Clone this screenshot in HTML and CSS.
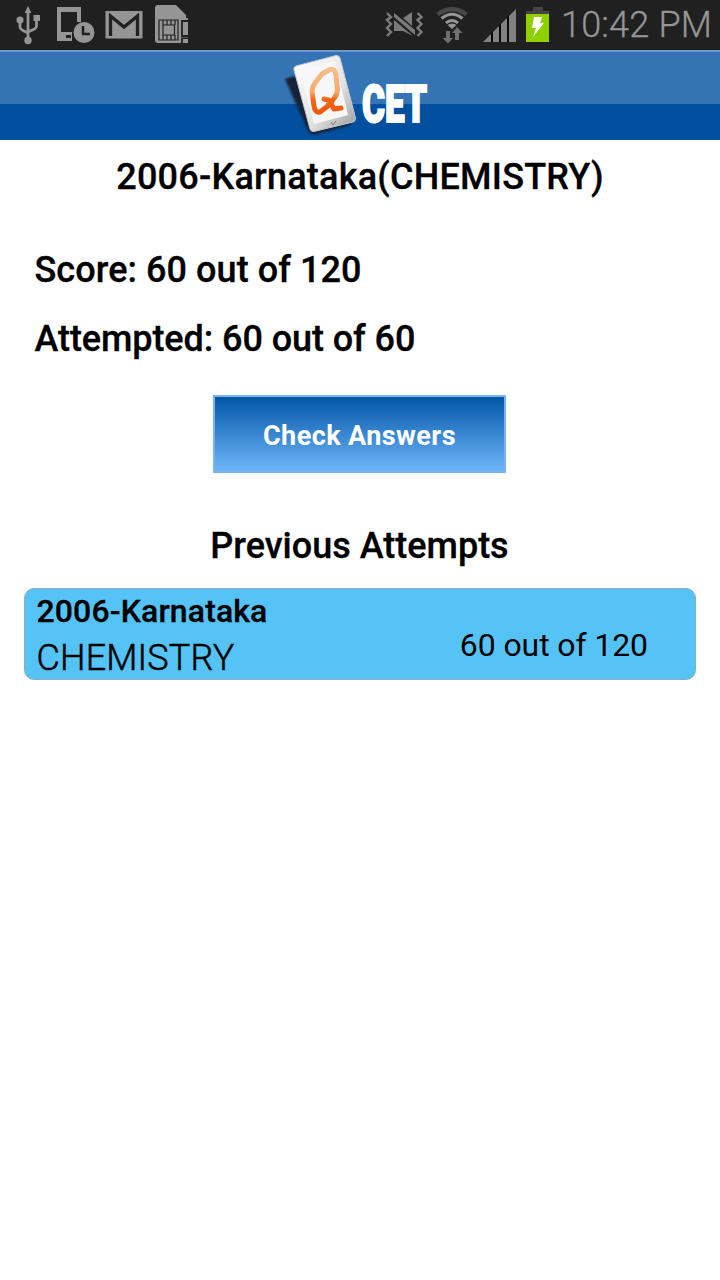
FILE: index.html
```html
<!DOCTYPE html>
<html lang="en">
<head>
<meta charset="utf-8">
<title>Test Result</title>
<link rel="stylesheet" href="styles.css">
</head>
<body>
<div class="status">
  <svg class="icons-left" width="200" height="50" viewBox="0 0 200 50" fill="#959595">
    <g fill="none" stroke="#959595" stroke-width="2.800">
      <path d="M28 11V38M20 20V27Q20 29 22 30L28 33M36.500 18V26Q36.500 28 34.500 29L28 32"/>
    </g>
    <path d="M24.500 13L28 6L31.500 13ZM33.500 15H40V21H33.500Z"/><circle cx="20" cy="20" r="3.500"/><circle cx="28" cy="40.500" r="3.700"/>
    <path fill-rule="evenodd" d="M57 7H81V22H77V12H61V32H72V41H57ZM66 35V38H71V35Z"/>
    <circle cx="84" cy="32.500" r="10.500"/>
    <path d="M83 26V34H90" fill="none" stroke="#202020" stroke-width="2.500"/>
    <path d="M105.500 11H142.500V38.500H105.500Z"/>
    <path d="M110.500 36V16L124 27L137.500 16V36" fill="none" stroke="#202020" stroke-width="3.300"/>
    <path d="M158 5H176L186 15V18H188V43H158Q155 43 155 40V8Q155 5 158 5Z"/>
    <g fill="none" stroke="#202020" stroke-width="1.200">
      <path d="M159 20H178V40H159ZM163 25H174.500V35H163ZM167 20V25M171 20V25M167 35V40M171 35V40M175 20V25M163 20V25M163 35V40M175 35V40"/>
      <path d="M182 21H188V36H182ZM182 38.500H188V43H182Z" stroke-width="1.800"/>
    </g>
    <path d="M183 22H188V35H183ZM183 39H188V43H183Z"/>
  </svg>
  <svg class="icons-right" width="170" height="50" viewBox="380 0 170 50" fill="#7b7b7b">
    <path d="M387 13L391 17L387 20L391 24L387 28L391 32L387 36M417.500 13L421.500 17L417.500 20L421.500 24L417.500 28L421.500 32L417.500 36" fill="none" stroke="#7b7b7b" stroke-width="2.400"/>
    <path d="M394 13L415 30V35L394 17ZM394 20L413 36L403 31H394ZM403 18L412 12V26Z"/>
    <g fill="none"><path d="M437.500 14.500Q452 4 466.500 14.500" stroke="#484848" stroke-width="4.500"/><path d="M441.500 18.500Q452 10 462.500 18.500M446 23Q452 18 458 23" stroke="#959595" stroke-width="3"/></g>
    <path d="M447.500 25Q452 22 456.500 25L452 29Z" fill="#959595"/>
    <path d="M446 31H450V38H453L448 43.500L442.500 38H446ZM455 40V33H452L457 27L462.500 33H459V40Z" fill="#707070"/>
    <path d="M483 42L516 9V42Z" fill="#818181"/>
    <path d="M492 32V42M500 24V42M508 16V42" stroke="#080808" stroke-width="2"/>
    <path d="M533 7H543V11H549V14H526V11H533Z" fill="#444"/>
    <path d="M526 14H549V42H526Z" fill="#8fd000"/>
    <path d="M534 17H542L540 23H544L533 37L536 28H532Z" fill="#fff"/>
  </svg>
  <span class="time">10:42 PM</span>
</div>
<header class="header">
  <svg class="logo" width="160" height="88" viewBox="280 52 160 88">
    <defs>
      <linearGradient id="q" gradientUnits="userSpaceOnUse" x1="0" y1="68" x2="0" y2="112"><stop offset="0" stop-color="#f4c08c"/><stop offset=".55" stop-color="#f5a96a"/><stop offset=".72" stop-color="#f06518"/><stop offset="1" stop-color="#f05a08"/></linearGradient>
      <linearGradient id="frame" x1="0" y1="0" x2="1" y2="1"><stop offset="0" stop-color="#fff"/><stop offset=".6" stop-color="#e2e2e2"/><stop offset="1" stop-color="#999"/></linearGradient>
      <filter id="soft"><feGaussianBlur stdDeviation="1.200"/></filter>
    </defs>
    <path d="M285 79L294 76L350 120L351 125L313 135L308 131Z" fill="#162437" filter="url(#soft)"/>
    <path d="M296 66L336 55.500Q339 55 340 58L355.500 118Q356 121 353 122L314 131.500Q311 132 310 129L294 70Q293 67 296 66Z" fill="url(#frame)" stroke="#c5c9cf"/>
    <path d="M300 70L335 61L348 115L314 124Z" fill="#f7f7f9"/>
    <path d="M328 106L320 112Q315 113 314 106L312 91Q312 87 315 83L322 74L330 69.500Q335 68 336 75L337.500 90Q337 97 328 105M324 99L329 100L334 109L341 108" fill="none" stroke="url(#q)" stroke-width="5" stroke-linecap="round" stroke-linejoin="round"/>
    <path d="M331 122L333 125L336 121" fill="none" stroke="#777"/>
    <text class="brand" x="362" y="121.500" textLength="65" lengthAdjust="spacingAndGlyphs">CET</text>
  </svg>
</header>
<main class="content">
  <h1 class="title">2006-Karnataka(CHEMISTRY)</h1>
  <p class="stat score">Score: 60 out of 120</p>
  <p class="stat attempted">Attempted: 60 out of 60</p>
  <button class="check">Check Answers</button>
  <h2 class="subtitle">Previous Attempts</h2>
  <section class="attempt">
    <div class="exam">
      <div class="exam-name">2006-Karnataka</div>
      <div class="subject">CHEMISTRY</div>
    </div>
    <div class="result">60 out of 120</div>
  </section>
</main>
</body>
</html>
```

FILE: styles.css
```css
* { box-sizing: border-box; }
body { margin: 0; width: 720px; height: 1280px; overflow: hidden; background: #fff; color: #000; font-family: Roboto, "Liberation Sans", sans-serif; }
.status { height: 50px; display: flex; background: #202020; }
.icons-left { display: block; }
.icons-right { display: block; margin-left: 180px; }
.time { margin-left: 11px; color: #959595; font-size: 36px; line-height: 50px; font-weight: 300; letter-spacing: .2px; white-space: nowrap; -webkit-text-stroke: .3px #959595; }
.header { height: 90px; display: flex; justify-content: center; border-top: 2px solid #6d9bcb; background: linear-gradient(#3474b5 0 52px, #00509f 52px); }
.logo { display: block; overflow: visible; }
.brand { font-family: Roboto, "Liberation Sans", sans-serif; font-size: 52px; font-weight: 900; fill: #fff; stroke: #fff; stroke-width: 2px; }
.content { display: flex; flex-direction: column; padding: 16px 24px 0; }
.title, .subtitle, .stat { margin: 0; font-size: 36px; line-height: 42px; font-weight: 500; white-space: nowrap; -webkit-text-stroke: .3px #000; }
.title, .subtitle { text-align: center; }
.title { letter-spacing: .22px; }
.subtitle { padding-right: 1px; }
.stat { padding-left: 10.5px; }
.score { margin-top: 51px; letter-spacing: .06px; }
.attempted { margin-top: 27px; letter-spacing: -.08px; }
.check { align-self: center; width: 293px; height: 78px; margin: 35px 1px 0 0; padding: 3px 0 0; border: 2px solid #78b4ed; background: linear-gradient(#0357a8, #6db5f8); color: #fff; font: 700 27px/32px Roboto, "Liberation Sans", sans-serif; letter-spacing: .42px; }
.subtitle { margin-top: 52px; }
.attempt { display: flex; height: 92px; margin-top: 21px; padding: 0 47px 0 11.5px; justify-content: space-between; border: 1px solid #8caec4; border-radius: 10px; background: #56c3f6; white-space: nowrap; }
.exam-name { padding-top: 3px; font-size: 32px; line-height: 38px; font-weight: 500; letter-spacing: .12px; -webkit-text-stroke: .3px #000; }
.subject { padding-top: 7px; font-size: 36px; line-height: 42px; font-weight: 300; letter-spacing: .15px; -webkit-text-stroke: .5px #000; }
.result { padding-top: 37px; font-size: 32px; line-height: 38px; font-weight: 400; letter-spacing: -.1px; }
```
